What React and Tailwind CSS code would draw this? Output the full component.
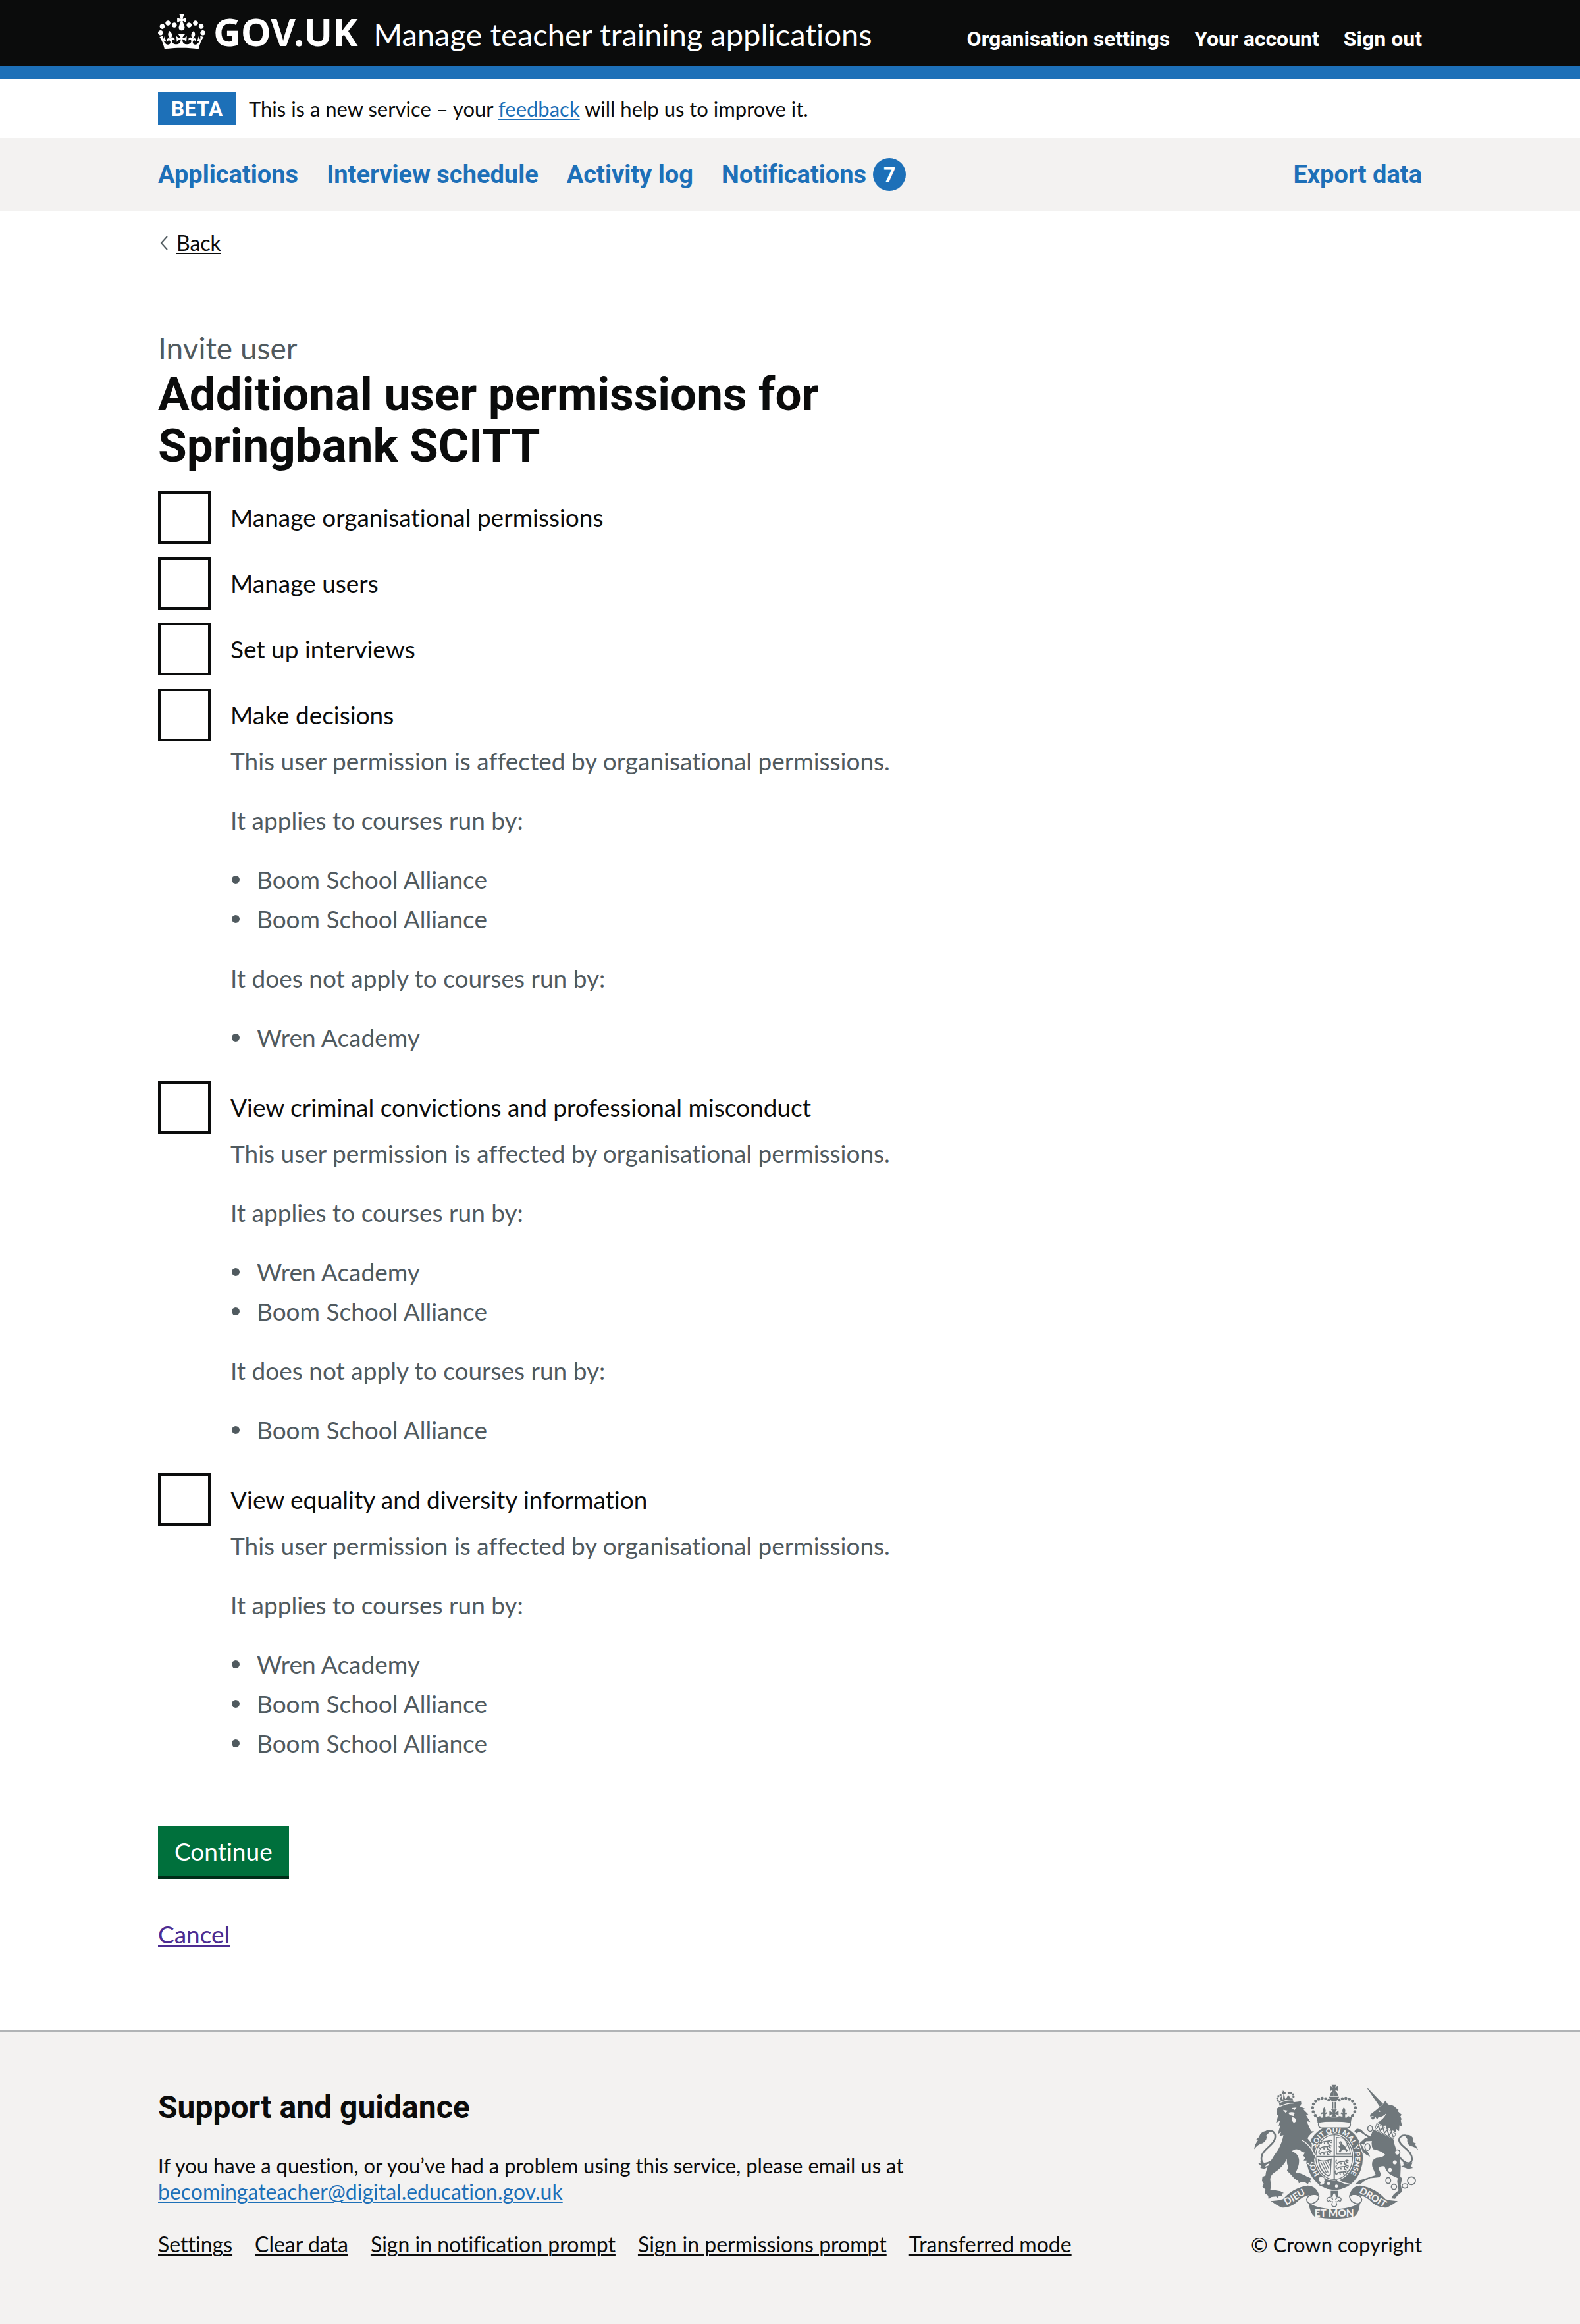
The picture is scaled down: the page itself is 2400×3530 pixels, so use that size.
import clsx from "clsx";

const CONTAINER = "mx-auto w-full max-w-[1980px] px-[30px]";
const UNDERLINE = "underline decoration-[2px] underline-offset-[3px]";
const STRONG = "font-['Roboto',sans-serif] font-bold";

const navItems = ["Applications", "Interview schedule", "Activity log"];
const accountLinks = ["Organisation settings", "Your account", "Sign out"];
const footerLinks = [
  "Settings",
  "Clear data",
  "Sign in notification prompt",
  "Sign in permissions prompt",
  "Transferred mode",
];

const permissions = [
  { id: "manage-organisations", label: "Manage organisational permissions" },
  { id: "manage-users", label: "Manage users" },
  { id: "set-up-interviews", label: "Set up interviews" },
  {
    id: "make-decisions",
    label: "Make decisions",
    applies: ["Boom School Alliance", "Boom School Alliance"],
    excludes: ["Wren Academy"],
  },
  {
    id: "view-safeguarding",
    label: "View criminal convictions and professional misconduct",
    applies: ["Wren Academy", "Boom School Alliance"],
    excludes: ["Boom School Alliance"],
  },
  {
    id: "view-diversity",
    label: "View equality and diversity information",
    applies: ["Wren Academy", "Boom School Alliance", "Boom School Alliance"],
    excludes: [],
  },
];

function CrownLogo() {
  return (
    <svg className="h-[53px] w-[72px] self-center" viewBox="0 0 132 97" fill="currentColor" aria-hidden="true">
      <path d="M25 30.2c3.5 1.5 7.7-.2 9.1-3.7 1.5-3.6-.2-7.8-3.9-9.2-3.6-1.4-7.6.3-9.1 3.9-1.4 3.5.3 7.5 3.9 9zM9 39.5c3.6 1.5 7.8-.2 9.2-3.7 1.5-3.6-.2-7.8-3.9-9.1-3.6-1.5-7.6.2-9.1 3.8-1.4 3.5.3 7.5 3.8 9zM4.4 57.2c3.5 1.5 7.7-.2 9.1-3.8 1.5-3.6-.2-7.7-3.9-9.1-3.5-1.5-7.6.3-9.1 3.8-1.4 3.5.3 7.6 3.9 9.1zm38.3-21.4c3.5 1.5 7.7-.2 9.1-3.8 1.5-3.6-.2-7.7-3.9-9.1-3.6-1.5-7.6.3-9.1 3.8-1.3 3.6.4 7.7 3.9 9.1zm64.4-5.6c-3.6 1.5-7.8-.2-9.1-3.7-1.5-3.6.2-7.8 3.8-9.2 3.6-1.4 7.7.3 9.2 3.9 1.3 3.5-.4 7.5-3.9 9zm15.9 9.3c-3.6 1.5-7.7-.2-9.1-3.7-1.5-3.6.2-7.8 3.7-9.1 3.6-1.5 7.7.2 9.2 3.8 1.5 3.5-.3 7.5-3.8 9zm4.7 17.7c-3.6 1.5-7.8-.2-9.2-3.8-1.5-3.6.2-7.7 3.9-9.1 3.6-1.5 7.7.3 9.2 3.8 1.3 3.5-.4 7.6-3.9 9.1zM89.3 35.8c-3.6 1.5-7.8-.2-9.2-3.8-1.4-3.6.2-7.7 3.9-9.1 3.6-1.5 7.7.3 9.2 3.8 1.4 3.6-.3 7.7-3.9 9.1zM69.7 17.7l8.9 4.7V9.3l-8.9 2.8c-.2-.3-.5-.6-.9-.9L72.4 0H59.6l3.5 11.2c-.3.3-.6.5-.9.9l-8.8-2.8v13.1l8.8-4.7c.3.3.6.7.9.9l-5 15.4v.1c-.2.8-.4 1.6-.4 2.4 0 4.1 3.1 7.5 7 8.1h.2c.3 0 .7.1 1 .1.4 0 .7 0 1-.1h.2c4-.6 7.1-4.1 7.1-8.1 0-.8-.1-1.7-.4-2.4V34l-5.1-15.4c.4-.2.7-.6 1-.9zM66 92.8c16.9 0 32.8 1.1 47.1 3.2 4-16.9 8.9-26.7 14-33.5l-9.6-3.4c1 4.9 1.1 7.2 0 10.2-1.5-1.4-3-4.3-4.2-8.7L108.6 76c2.8-2 5-3.2 7.5-3.3-4.4 9.4-10 11.9-13.6 11.2-4.3-.8-6.3-4.6-5.6-7.9 1-4.7 5.7-5.9 8-.5 4.3-8.7-3-11.4-7.6-8.8 7.1-7.2 7.9-13.5 2.1-21.1-8 6.1-8.1 12.3-4.5 20.8-4.7-5.4-12.1-2.5-9.5 6.2 3.4-5.2 7.9-2 7.2 3.1-.6 4.3-6.4 7.8-13.5 7.2-10.3-.9-10.9-8-11.2-13.8 2.5-.5 7.1 1.8 11 7.3L80.2 60c-4.1 4.4-8 5.3-12.3 5.4 1.4-4.4 8-11.6 8-11.6H55.5s6.4 7.2 7.9 11.6c-4.2-.1-8-1-12.3-5.4l1.4 16.4c3.9-5.5 8.5-7.7 10.9-7.3-.3 5.8-.9 12.8-11.1 13.8-7.2.6-12.9-2.9-13.5-7.2-.7-5 3.8-8.3 7.1-3.1 2.7-8.7-4.6-11.6-9.4-6.2 3.7-8.5 3.6-14.7-4.6-20.8-5.8 7.6-5 13.9 2.2 21.1-4.7-2.6-11.9.1-7.7 8.8 2.3-5.5 7.1-4.2 8.1.5.7 3.3-1.3 7.1-5.7 7.9-3.5.7-9-1.8-13.5-11.2 2.5.1 4.7 1.3 7.5 3.3l-4.7-15.4c-1.2 4.4-2.7 7.2-4.3 8.7-1.1-3-.9-5.3 0-10.2l-9.5 3.4c5 6.9 9.9 16.7 14 33.5 14.8-2.1 30.8-3.2 47.7-3.2z" />
    </svg>
  );
}

const INK = "#6f777b";
const PAPER = "#f3f2f1";
const archDots = [
  [352, 218], [342, 201], [339, 183], [343, 166], [353, 152], [367, 143], [383, 139], [399, 141], [413, 148],
];
const lionCrownDots = [
  [180, 150], [178, 139], [183, 129], [193, 124], [230, 114], [241, 114], [250, 121], [252, 132],
];

function Fleur({ x, y }) {
  return (
    <path
      transform={`translate(${x} ${y})`}
      d="M0-26C8-16 8-8 4 0C10-6 16-2 13 7C11 3 7 4 6 8L6 18H-6L-6 8C-7 4-11 3-13 7C-16-2-10-6-4 0C-8-8-8-16 0-26Z"
    />
  );
}

function SmallLion({ x, y }) {
  return (
    <g transform={`translate(${x} ${y})`} fill="none" stroke={INK} strokeWidth="5">
      <path d="M-26 8C-32 0-32-6-26-8M-22 4C-10-4 2 0 12-4L20-8L28-4M-20 4L-24 11M-8 3L-6 11M8 0L10 10L18 11M14-3L26 5" />
    </g>
  );
}

function RoyalArms() {
  return (
    <svg className="h-[205px] w-[250px]" viewBox="72 76 752 616" fill={INK} role="img" aria-label="Royal coat of arms">
      <defs>
        <path id="garter" d="M376 493A94 113 0 1 1 480 512" />
      </defs>

      {/* Garter and shield */}
      <ellipse cx="440" cy="410" rx="129" ry="148" />
      <ellipse cx="438" cy="408" rx="90" ry="108" fill={PAPER} />
      <ellipse cx="438" cy="408" rx="84" ry="102" fill="none" stroke={INK} strokeWidth="4" />
      <path d="M438 306V510M354 406H522" fill="none" stroke={INK} strokeWidth="6" />
      <SmallLion x={400} y={338} />
      <SmallLion x={398} y={362} />
      <SmallLion x={398} y={386} />
      <SmallLion x={476} y={430} />
      <SmallLion x={476} y={454} />
      <SmallLion x={472} y={478} />
      <path d="M448 318L480 322Q506 346 512 394H448Z" fill="none" stroke={INK} strokeWidth="4" />
      <path d="M458 338L468 346L464 334L474 338L476 350Q490 354 492 370L502 376L494 384L484 372L474 374L466 388L458 384L466 368L456 360L466 358Z M496 340Q504 352 494 362" />
      <path d="M366 422Q390 432 424 418L420 486Q410 500 396 484Q370 460 366 422Z" fill="none" stroke={INK} strokeWidth="5" />
      <path d="M376 430L402 480M387 430L410 478M398 429L415 464M408 427L420 450" stroke={INK} strokeWidth="4" />
      <text fill={PAPER} fontFamily="Lato, sans-serif" fontWeight="900" fontSize="33" dx="0 0 0 66">
        <textPath href="#garter" startOffset="8">HO SOIT QUI MAL Y PENSE</textPath>
      </text>
      <path d="M452 514Q480 528 510 532" fill="none" stroke={PAPER} strokeWidth="5" />
      <path d="M392 500Q372 488 366 504Q362 518 374 524Q364 538 382 537Q400 532 394 518" fill={PAPER} stroke={INK} strokeWidth="5" />
      <circle cx="412" cy="529" r="7" fill={PAPER} />
      <circle cx="448" cy="541" r="7" fill={PAPER} />

      {/* Crown */}
      <rect x="366" y="244" width="146" height="31" rx="14" fill={PAPER} stroke={INK} strokeWidth="5" />
      <path d="M346 208Q356 212 362 226Q376 214 380 228L404 222Q420 218 424 228L450 228Q456 218 470 222L494 228Q500 214 512 226Q518 212 530 208Q514 232 514 252Q440 238 362 252Q362 230 346 208Z" />
      <Fleur x={392} y={206} />
      <Fleur x={482} y={206} />
      <path d="M422 188Q437 194 452 188Q443 200 443 204Q448 203 458 195V219Q448 211 443 211Q444 218 454 228H420Q430 218 431 211Q426 211 416 219V195Q426 203 431 204Q431 200 422 188Z" />
      <path d="M427 156H434V186H427ZM440 156H447V186H440Z" />
      <path d="M414 132H460Q456 154 437 154Q418 154 414 132Z" />
      <path d="M418 128Q420 108 437 106Q454 108 456 128ZM426 78H448L442 90L454 84V106L442 100L446 110H428L432 100L420 106V84L432 90Z" />
      <path d="M437 112V128" stroke={PAPER} strokeWidth="3" />
      {archDots.map(([x, y]) => (
        <g key={x + "-" + y}>
          <circle cx={x} cy={y} r="7" />
          <circle cx={874 - x} cy={y} r="7" />
        </g>
      ))}

      {/* Lion */}
      <path
        stroke={PAPER}
        strokeWidth="8"
        paintOrder="stroke"
        d="M186 180L250 158L286 153L288 164L282 177L305 187L298 191L320 213L308 214L329 248L312 243L324 272L333 290L346 291Q326 304 316 322Q330 336 336 352L334 372L344 396L352 404L346 418L348 434L334 430L328 444L318 434L310 440L312 424L298 424L306 410L296 402L304 388L290 384L280 374L262 372L244 380Q272 392 276 414Q282 440 262 478Q292 482 316 498L332 504L328 516L334 526L322 522L318 532L306 524L284 524L276 528L274 518L256 506L240 488L222 470L228 452Q220 440 222 416Q206 452 162 480Q144 494 146 514Q150 536 146 558L170 560L192 564L208 572L196 576L204 588L188 584L178 594L172 588L152 590L138 600L136 584L120 572L124 556L110 544L116 530L108 516L110 498L124 492Q126 462 146 430Q162 400 182 374Q200 340 206 308L188 312L196 292L180 304L192 262L184 266L190 242L172 252L182 218L174 212L178 196L174 188Z"
      />
      <path d="M204 192L226 196L216 206ZM244 184L266 182L256 194ZM228 206Q244 200 258 206L252 220L236 216Z" fill={PAPER} />
      <path d="M244 226Q258 224 264 238Q262 252 252 250Q244 244 244 226Z" fill={PAPER} />
      <path d="M290 330Q330 352 346 396" fill="none" stroke={PAPER} strokeWidth="4" />
      <path d="M176 404Q144 440 116 438Q100 428 108 398C120 366 176 346 168 306C158 278 124 288 112 304" fill="none" stroke={INK} strokeWidth="8" />
      <path d="M150 288Q112 286 100 304Q94 320 80 330L92 328Q76 346 72 372Q88 350 112 344Q134 330 128 308ZM88 434L104 438L100 428L130 440L122 452L142 446L120 462L100 458L106 450Z" />
      <path d="M190 180L184 154Q216 134 248 140L254 166Q220 164 190 180Z" />
      <path d="M188 160Q218 144 250 147M192 176Q220 162 252 162" fill="none" stroke={PAPER} strokeWidth="4" />
      {lionCrownDots.map(([x, y]) => (
        <circle key={x + "-" + y} cx={x} cy={y} r="5" />
      ))}
      <path d="M198 108L204 112L202 104L210 106L208 112L216 110V120L209 118L214 144H204L206 119L199 122ZM190 144L196 128L204 146ZM216 144L228 124L238 138Z" />

      {/* Unicorn */}
      <path d="M588 93L594 95L662 166L646 178Z" />
      <path d="M602 214L630 192L644 180L660 168L672 150L684 168Q712 170 720 184L732 192L728 198L746 214L740 222L746 234L742 240L749 270L736 264L734 290L722 280L718 296L706 286L700 292L690 276L680 282L672 264L660 268Q650 256 634 252Q664 236 678 206Q660 226 640 226L634 236L626 224L618 236Q606 238 608 226L620 220L602 222Z" />
      <path d="M642 194L652 198L644 202Z" fill={PAPER} />
      <path
        stroke={PAPER}
        strokeWidth="8"
        paintOrder="stroke"
        d="M616 282L708 326Q712 350 722 376L738 416L742 452L740 496L748 506L742 534L748 566L726 584L716 598L698 596L710 578L732 560L726 520L728 504L718 498Q678 486 668 450Q646 448 640 458L652 488L644 500L602 504L572 520L560 530L536 530L552 514L580 506L628 490L612 452Q606 420 630 412Q668 408 670 396Q650 378 616 372Q606 356 610 334L584 336L572 352L560 346L574 372L590 382L602 406L586 398L568 384L554 344L578 322L592 318L566 300L554 292L538 300L530 290L542 278L560 282L580 302L604 314Z"
      />
      <path d="M632 254L720 302L708 324L624 282Z" fill={PAPER} stroke={INK} strokeWidth="3" />
      <path d="M630 280L640 266L648 288L660 274L668 298L680 284L688 308L700 294L708 318" fill="none" stroke={INK} strokeWidth="5" />
      <path d="M728 396Q756 440 784 436Q802 420 786 392C772 366 726 350 736 322C748 302 776 306 784 326" fill="none" stroke={INK} strokeWidth="8" />
      <path d="M760 308Q784 302 796 318Q802 330 798 340L816 348L808 350L822 376Q804 360 786 358Q768 346 772 326ZM752 432L776 440L796 432L788 452L798 458L776 462L744 450L756 446Z" />
      <g fill="none" stroke={INK} strokeWidth="5">
        <ellipse cx="602" cy="278" rx="11" ry="13" fill={PAPER} />
        <ellipse cx="590" cy="362" rx="12" ry="15" fill={PAPER} />
        <circle cx="726" cy="387" r="12" fill={PAPER} />
        <ellipse cx="685" cy="515" rx="11" ry="14" />
        <circle cx="711" cy="544" r="12" />
        <ellipse cx="761" cy="540" rx="13" ry="10" />
        <circle cx="791" cy="516" r="18" />
      </g>
      <circle cx="715" cy="432" r="9" fill={PAPER} />
      <ellipse cx="693" cy="467" rx="8" ry="10" fill={PAPER} />

      {/* Pendant */}
      <path d="M422 562H454V590H422Z" />
      <path d="M438 568Q452 582 446 598Q466 582 470 602Q468 614 458 606Q452 614 446 612L450 628Q438 642 426 628L430 612Q424 614 418 606Q408 614 404 602Q410 582 430 598Q424 582 438 568Z" fill={PAPER} stroke={INK} strokeWidth="4" />

      {/* Motto ribbon */}
      <path d="M148 608Q176 610 204 600Q250 548 316 538Q356 538 370 584L326 582Q296 584 262 618Q232 642 196 638Q170 626 148 608Z" />
      <path d="M728 608Q700 610 672 600Q626 548 556 538Q520 538 506 584L550 582Q580 584 614 618Q644 642 680 638Q706 626 728 608Z" />
      <path d="M346 578Q316 580 312 602Q314 620 334 622Q366 612 368 588Q360 578 346 578Z" fill={PAPER} stroke={INK} strokeWidth="5" />
      <path d="M530 578Q560 580 564 602Q562 620 542 622Q510 612 508 588Q516 578 530 578Z" fill={PAPER} stroke={INK} strokeWidth="5" />
      <path d="M320 614Q350 642 438 646Q526 642 556 614Q552 668 526 682Q440 698 350 682Q328 668 320 614Z" />
      <g fill={PAPER} fontFamily="Lato, sans-serif" fontWeight="900" textAnchor="middle">
        <text transform="translate(264 603) rotate(-30)" fontSize="43">DIEU</text>
        <text transform="translate(608 604) rotate(31)" fontSize="43">DROIT</text>
        <text x="438" y="681" fontSize="46">ET MON</text>
      </g>
    </svg>
  );
}

function Header() {
  return (
    <header className="border-b-[20px] border-[#1d70b8] bg-[#0b0c0c] text-white">
      <div className={clsx(CONTAINER, "flex flex-wrap items-baseline justify-between pt-[18px] pb-[22px]")}>
        <div className="flex items-baseline gap-[24px]">
          <a href="#home" className="flex items-baseline gap-[12px]">
            <CrownLogo />
            <span className="font-['Noto_Sans',sans-serif] text-[58px] leading-[60px] font-bold">GOV.UK</span>
          </a>
          <a href="#service" className="text-[47px] leading-none">
            Manage teacher training applications
          </a>
        </div>
        <nav aria-label="Account" className={clsx(STRONG, "flex gap-[37px] text-[32px] leading-none")}>
          {accountLinks.map((text) => (
            <a key={text} href="#account">{text}</a>
          ))}
        </nav>
      </div>
    </header>
  );
}

function PhaseBanner() {
  return (
    <div className={clsx(CONTAINER, "flex items-center gap-[20px] py-[20px] text-[31px] leading-[50px]")}>
      <strong className={clsx(STRONG, "min-w-[118px] bg-[#1d70b8] px-[16px] text-center text-[32px] text-white")}>BETA</strong>
      <p>
        This is a new service – your{" "}
        <a href="#feedback" className={clsx(UNDERLINE, "text-[#1d70b8]")}>feedback</a> will help us to improve it.
      </p>
    </div>
  );
}

function PrimaryNav() {
  return (
    <div className="bg-[#f3f2f1]">
      <nav
        aria-label="Primary"
        className={clsx(CONTAINER, STRONG, "flex items-center gap-[43px] py-[30px] text-[38px] leading-[50px] text-[#1d70b8]")}
      >
        {navItems.map((text) => (
          <a key={text} href="#nav">{text}</a>
        ))}
        <a href="#notifications" className="flex items-center gap-[10px]">
          Notifications
          <span className="size-[50px] rounded-full bg-[#1d70b8] text-center text-[32px] text-white">7</span>
        </a>
        <a href="#export" className="ml-auto">Export data</a>
      </nav>
    </div>
  );
}

function CourseList({ items }) {
  return (
    <ul className="mb-[30px] last:mb-0">
      {items.map((name, i) => (
        <li
          key={i}
          className="flex items-center gap-[26px] pl-[2px] before:size-[12px] before:rounded-full before:bg-current before:content-['']"
        >
          {name}
        </li>
      ))}
    </ul>
  );
}

function Permission({ id, label, applies, excludes }) {
  return (
    <div className="grid grid-cols-[80px_1fr] gap-x-[30px]">
      <input
        id={id}
        type="checkbox"
        aria-describedby={applies ? id + "-hint" : undefined}
        className="size-[80px] appearance-none border-4 border-[#0b0c0c] bg-white"
      />
      <label htmlFor={id} className="self-center">{label}</label>
      {applies && (
        <div id={id + "-hint"} className="col-start-2 pb-[16px] leading-[60px] text-[#505a5f]">
          <p className="mb-[30px]">This user permission is affected by organisational permissions.</p>
          <p className="mb-[30px]">It applies to courses run by:</p>
          <CourseList items={applies} />
          {excludes.length > 0 && (
            <>
              <p className="mb-[30px]">It does not apply to courses run by:</p>
              <CourseList items={excludes} />
            </>
          )}
        </div>
      )}
    </div>
  );
}

function Footer() {
  return (
    <footer className="border-t-2 border-[#b1b4b6] bg-[#f3f2f1] text-[32px] leading-[40px]">
      <div className={clsx(CONTAINER, "flex items-end justify-between gap-[30px] pt-[80px] pb-[104px]")}>
        <div>
          <h2 className={clsx(STRONG, "text-[48px] leading-[60px]")}>Support and guidance</h2>
          <p className="mt-[38px] max-w-[1250px] text-[31px]">
            If you have a question, or you’ve had a problem using this service, please email us at{" "}
            <a
              href="mailto:becomingateacher@digital.education.gov.uk"
              className={clsx(UNDERLINE, "text-[32px] text-[#1d70b8]")}
            >
              becomingateacher@digital.education.gov.uk
            </a>
          </p>
          <ul className="mt-[40px] flex flex-wrap gap-x-[34px]">
            {footerLinks.map((text) => (
              <li key={text}>
                <a href="#footer" className={UNDERLINE}>{text}</a>
              </li>
            ))}
          </ul>
        </div>
        <div className="flex flex-none flex-col items-center gap-[18px]">
          <RoyalArms />
          <a href="#copyright" className="text-[31px]">© Crown copyright</a>
        </div>
      </div>
    </footer>
  );
}

export default function App() {
  return (
    <div className="flex min-h-screen flex-col bg-white font-['Lato',sans-serif] text-[#0b0c0c] [font-variant-ligatures:none]">
      <Header />
      <PhaseBanner />
      <PrimaryNav />
      <div className={clsx(CONTAINER, "pt-[29px] pb-[121px] text-[37px] leading-[50px]")}>
        <a href="#back" className="flex w-fit items-center gap-[13px] pl-[3px] text-[32px] leading-[40px]">
          <svg className="h-[22px] w-[12px]" viewBox="0 0 12 22" fill="none" stroke="#505a5f" strokeWidth="2" aria-hidden="true">
            <path d="M11 1L2 11L11 21" />
          </svg>
          <span className={UNDERLINE}>Back</span>
        </a>
        <main className="mt-[110px] w-2/3 pr-[30px]">
          <form onSubmit={(e) => e.preventDefault()}>
            <fieldset>
              <legend className="mb-[30px]">
                <span className="mb-[1px] block text-[46px] leading-[60px] text-[#505a5f]">Invite user</span>
                <h1 className={clsx(STRONG, "text-[71px] leading-[78px]")}>
                  Additional user permissions for Springbank SCITT
                </h1>
              </legend>
              <div className="flex flex-col gap-[20px]">
                {permissions.map((p) => (
                  <Permission key={p.id} {...p} />
                ))}
              </div>
            </fieldset>
            <button
              type="submit"
              className="mt-[80px] block bg-[#00703c] px-[25px] py-[13px] text-white shadow-[0_4px_0_#002d18]"
            >
              Continue
            </button>
          </form>
          <p className="mt-[63px]">
            <a href="#cancel" className={clsx(UNDERLINE, "text-[#4c2c92]")}>Cancel</a>
          </p>
        </main>
      </div>
      <Footer />
    </div>
  );
}
